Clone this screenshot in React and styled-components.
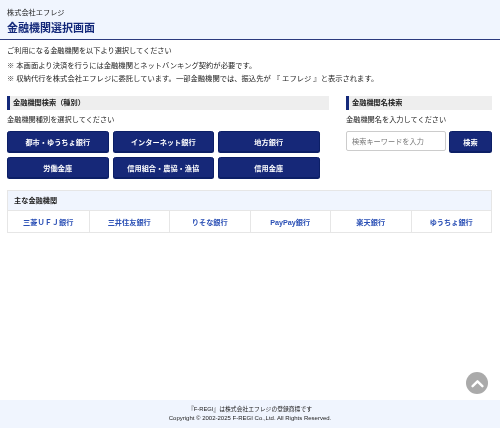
import React from "react";
import styled, { createGlobalStyle } from "styled-components";

const FONT = `"Liberation Sans", "Noto Sans CJK JP", sans-serif`;
const Global = createGlobalStyle`
  html, body { margin: 0; padding: 0; background: #fff; }
  body { font-family: ${FONT}; color: #222; }
  #root { height: 428px; }
`;
const Page = styled.div`
  position: relative; height: 428px; display: flex; flex-direction: column; overflow: hidden;
  will-change: transform;
`;
const Header = styled.header`
  height: 40px; box-sizing: border-box; background: #f0f5fe; border-bottom: 1.5px solid #2b3a7e;
  padding: 8px 7px 0;
`;
const Company = styled.div`font-size: 7.2px; line-height: 9px; color: #222;`;
const Title = styled.h1`
  margin: 4px 0 0; font-size: 11px; line-height: 14px; font-weight: 700; color: #14297a;
`;
const Main = styled.main`flex: 1; padding: 5px 7px 0 7px;`;
const Lead = styled.p`margin: 1px 0 0; font-size: 7.2px; line-height: 10px; color: #222;`;
const Notes = styled.ul`margin: 5px 0 0; padding: 0; list-style: none; display: flex; flex-direction: column; gap: 3px;`;
const Note = styled.li`font-size: 7.3px; line-height: 10px; color: #222;`;
const NoteMark = styled.span`font-family: "Noto Sans CJK JP", sans-serif; line-height: 0; color: #333;`;
const Columns = styled.div`display: flex; gap: 17px; margin-top: 12px;`;
const Left = styled.section`width: 322px;`;
const Right = styled.section`width: 146px;`;
const SectionHead = styled.h2`
  margin: 0; height: 14px; box-sizing: border-box; background: #eee; border-left: 3px solid #14297a;
  padding-left: 3px; font-size: 7.2px; line-height: 14px; font-weight: 700; color: #222;
`;
const Hint = styled.p`margin: 5px 0 0; font-size: 7.2px; line-height: 10px; color: #222;`;
const BankGrid = styled.div`
  display: grid; grid-template-columns: repeat(3, 101.5px); gap: 5px 4px; margin-top: 6px;
`;
const NavyButton = styled.button`
  height: 21px; padding: 0; border: 1px solid #0c1f66; border-radius: 2.5px; background: #162878;
  color: #fff; font: 700 7.2px ${FONT};
  box-shadow: 0 1px 0 #0c1f66;
  ${(p) => (p.$narrow ? "width: 43px; flex: none;" : "")}
`;
const SearchRow = styled.div`display: flex; gap: 3px; margin-top: 6px;`;
const SearchInput = styled.input`
  width: 100px; height: 20px; box-sizing: border-box; border: 1px solid #ccc; border-radius: 2px;
  padding: 0 5px; font: 7.2px ${FONT}; outline: none;
  &::placeholder { color: #777; }
`;
const Table = styled.section`
  margin-top: 12px; width: 485px; border: 1px solid #e6e6e6; box-sizing: border-box;
`;
const TableHead = styled.div`
  height: 20px; box-sizing: border-box; background: #f0f5fe; border-bottom: 1px solid #e6e6e6;
  padding-left: 6px; font-size: 7.2px; line-height: 19px; font-weight: 700; color: #222;
`;
const TableRow = styled.div`display: grid; grid-template-columns: repeat(6, 1fr);`;
const BankLink = styled.a`
  height: 21px; display: flex; align-items: center; justify-content: center;
  font-size: 7.2px; font-weight: 700; color: #2a4fb5; text-decoration: none;
  border-left: 1px solid #e6e6e6;
  &:first-child { border-left: none; }
`;
const Footer = styled.footer`
  height: 28px; background: #f0f5fe; text-align: center; padding-top: 5px;
  box-sizing: border-box; font-size: 6px; line-height: 9px; color: #222;
`;
const Trademark = styled.div`font-size: 5.8px;`;
const Copyright = styled.div``;
const TopButton = styled.a`
  position: absolute; left: 466px; top: 372px; width: 22px; height: 22px; border-radius: 50%;
  background: #aaa; display: flex; align-items: center; justify-content: center;
`;

const types = ["都市・ゆうちょ銀行", "インターネット銀行", "地方銀行", "労働金庫", "信用組合・農協・漁協", "信用金庫"];
const banks = ["三菱ＵＦＪ銀行", "三井住友銀行", "りそな銀行", "PayPay銀行", "楽天銀行", "ゆうちょ銀行"];

export default function App() {
  return (
    <Page>
      <Global />
      <Header>
        <Company>株式会社エフレジ</Company>
        <Title>金融機関選択画面</Title>
      </Header>
      <Main>
        <Lead>ご利用になる金融機関を以下より選択してください</Lead>
        <Notes>
          <Note><NoteMark>※</NoteMark> 本画面より決済を行うには金融機関とネットバンキング契約が必要です。</Note>
          <Note><NoteMark>※</NoteMark> 収納代行を株式会社エフレジに委託しています。一部金融機関では、振込先が 『 エフレジ 』と表示されます。</Note>
        </Notes>
        <Columns>
          <Left>
            <SectionHead>金融機関検索（種別）</SectionHead>
            <Hint>金融機関種別を選択してください</Hint>
            <BankGrid>
              {types.map((t) => <NavyButton key={t}>{t}</NavyButton>)}
            </BankGrid>
          </Left>
          <Right>
            <SectionHead>金融機関名検索</SectionHead>
            <Hint>金融機関名を入力してください</Hint>
            <SearchRow>
              <SearchInput placeholder="検索キーワードを入力" />
              <NavyButton $narrow>検索</NavyButton>
            </SearchRow>
          </Right>
        </Columns>
        <Table>
          <TableHead>主な金融機関</TableHead>
          <TableRow>
            {banks.map((b) => <BankLink key={b}>{b}</BankLink>)}
          </TableRow>
        </Table>
      </Main>
      <Footer>
        <Trademark>『F-REGI』は株式会社エフレジの登録商標です</Trademark>
        <Copyright>Copyright © 2002-2025 F-REGI Co.,Ltd. All Rights Reserved.</Copyright>
      </Footer>
      <TopButton>
        <svg width="13" height="9" viewBox="0 0 12 8" fill="none"><path d="M1.5 6.5 6 2l4.5 4.5" stroke="#fff" strokeWidth="2.2" strokeLinecap="round" strokeLinejoin="round"/></svg>
      </TopButton>
    </Page>
  );
}
